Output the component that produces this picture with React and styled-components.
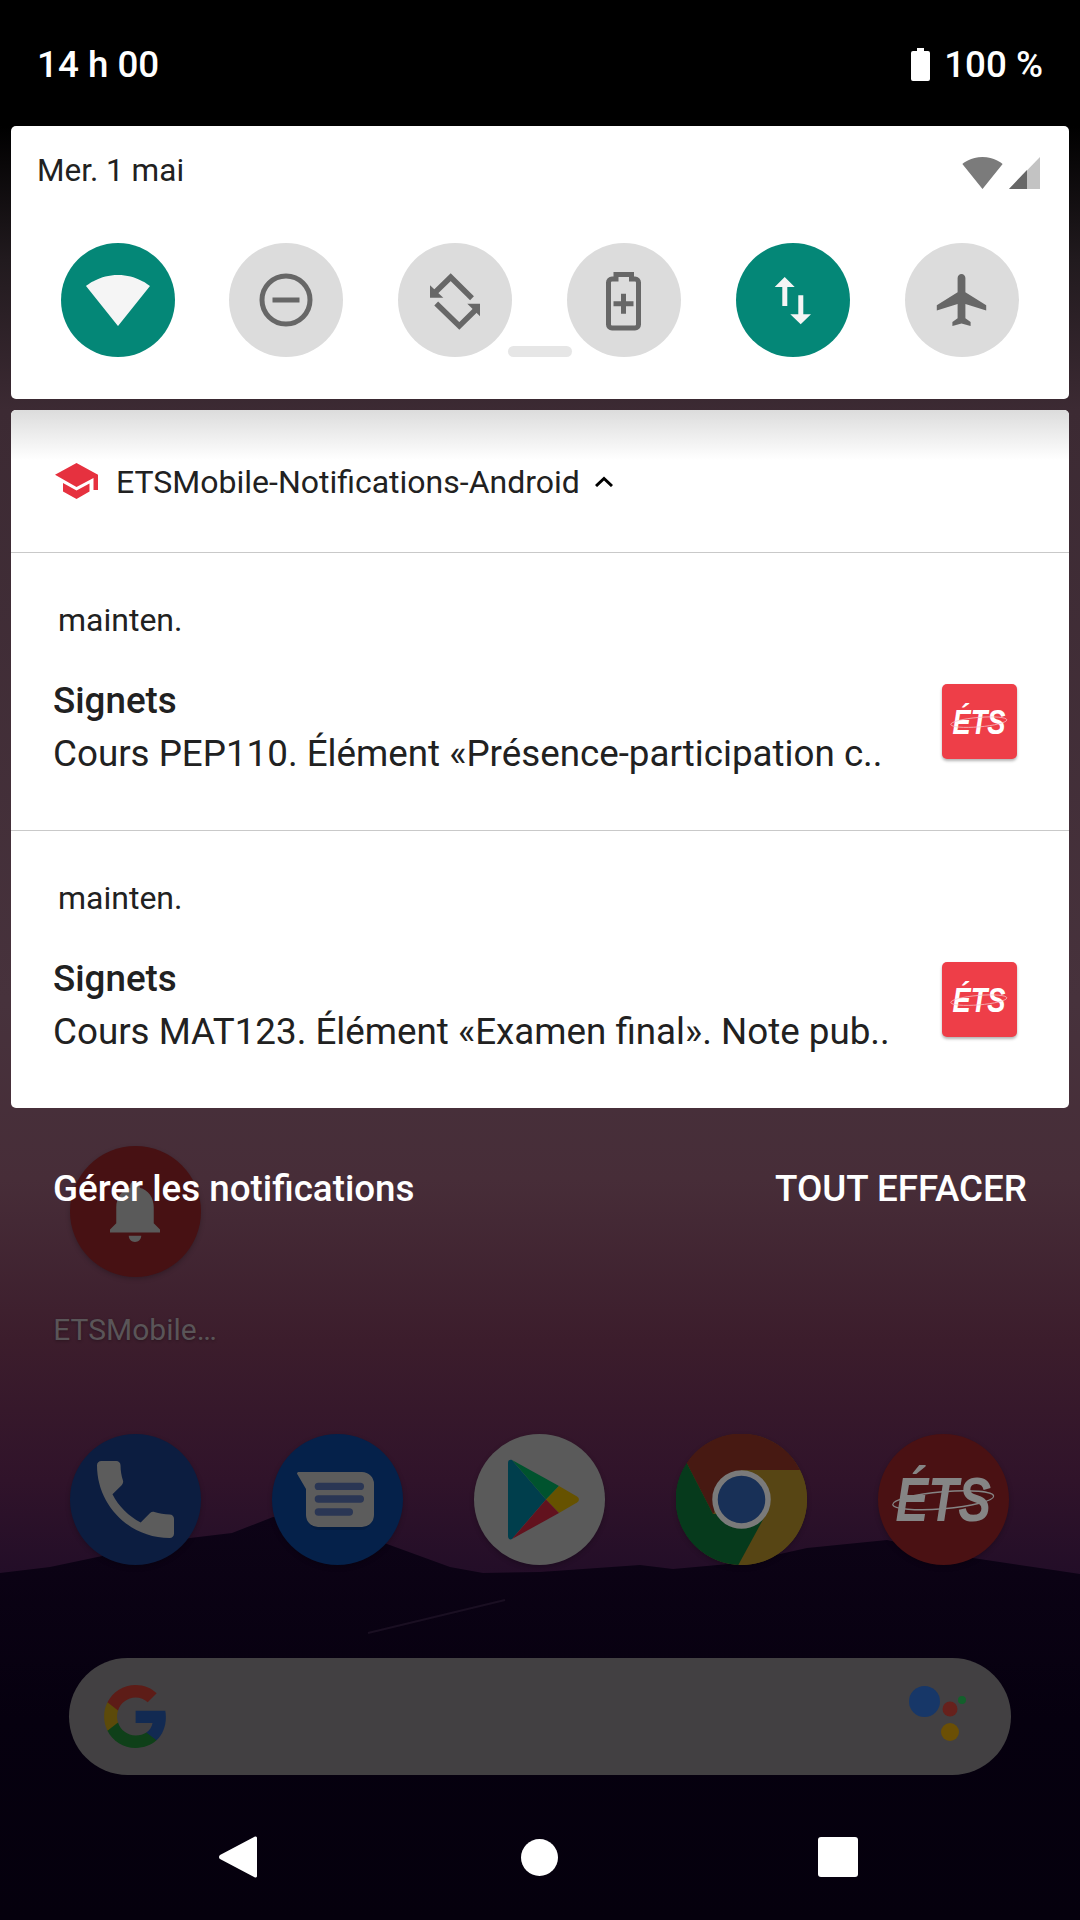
import React from "react";
import styled, { createGlobalStyle } from "styled-components";

const GlobalStyle = createGlobalStyle`
  html, body {
    margin: 0;
    padding: 0;
    background: #000;
  }
  * {
    box-sizing: border-box;
  }
`;

const Screen = styled.div`
  position: relative;
  width: 1080px;
  height: 1920px;
  overflow: hidden;
  font-family: Roboto, "Liberation Sans", sans-serif;
  background: linear-gradient(
    #000 0,
    #000 126px,
    #211a1e 260px,
    #3c2a33 410px,
    #47323c 1000px,
    #472d38 1180px,
    #3c1d2c 1340px,
    #30132a 1480px,
    #1f0c27 1600px
  );
`;

const Hills = styled.svg`
  position: absolute;
  left: 0;
  top: 1500px;
  width: 1080px;
  height: 420px;
`;

/* home screen behind the shade */
const Home = styled.div`
  position: absolute;
  inset: 0;
  display: flex;
  flex-direction: column;
  justify-content: flex-end;
`;

const Shortcut = styled.div`
  width: 202px;
  display: flex;
  flex-direction: column;
  align-items: center;
  margin-left: 34px;
`;

const ShortcutLabel = styled.div`
  margin-top: 36px;
  font-size: 30px;
  line-height: 34px;
  color: #5a5558;
  text-shadow: 0 1px 3px rgba(0, 0, 0, 0.3);
`;

const Dock = styled.div`
  display: flex;
  gap: 71px;
  padding-left: 70px;
  margin-top: 87px;
`;

const AppIcon = styled.div`
  position: relative;
  width: 131px;
  height: 131px;
  flex: none;
  display: flex;
  align-items: center;
  justify-content: center;
  border-radius: 50%;
  background: ${(p) => p.$bg};
  box-shadow: 0 2px 5px rgba(0, 0, 0, 0.22);
`;

const SearchBar = styled.div`
  height: 117px;
  margin: 93px 69px 0;
  padding: 0 40px 0 35px;
  display: flex;
  align-items: center;
  justify-content: space-between;
  border-radius: 59px;
  background: #424042;
`;

const NavBar = styled.div`
  height: 126px;
  margin-top: 19px;
  padding-left: 219px;
  padding-right: 222px;
  display: flex;
  align-items: center;
  justify-content: space-between;
`;

const HomeDot = styled.svg`
  margin-left: 4px;
`;

/* notification shade */
const Shade = styled.div`
  position: relative;
  z-index: 1;
  display: flex;
  flex-direction: column;
  height: 1920px;
`;

const StatusBar = styled.div`
  height: 126px;
  padding: 0 37px 0 37px;
  display: flex;
  align-items: flex-start;
  justify-content: space-between;
  color: #fff;
  font-size: 36.75px;
  font-weight: 500;
  line-height: 40px;
`;

const StatusText = styled.span`
  margin-top: 45px;
`;

const StatusRight = styled.div`
  display: flex;
  align-items: flex-start;
  gap: 14px;
`;

const QuickPanel = styled.section`
  position: relative;
  height: 273px;
  margin: 0 11px;
  border-radius: 5px;
  background: #fff;
`;

const DateRow = styled.div`
  height: 117px;
  padding: 27px 29px 0 26px;
  display: flex;
  align-items: flex-start;
  justify-content: space-between;
  color: #212121;
  font-size: 31.5px;
  line-height: 36px;
`;

const RowIcons = styled.div`
  display: flex;
  align-items: flex-start;
  gap: 6px;
  padding-top: 4px;
`;

const Tiles = styled.div`
  display: flex;
  justify-content: space-between;
  padding: 0 50px 0 49.6px;
`;

const Tile = styled.div`
  width: 114px;
  height: 114px;
  display: flex;
  align-items: center;
  justify-content: center;
  border-radius: 50%;
  background: ${(p) => (p.$on ? "#048777" : "#dcdcdc")};
`;

const Handle = styled.div`
  position: absolute;
  left: 497px;
  top: 220px;
  width: 64px;
  height: 11px;
  border-radius: 6px;
  background: #e6e6e6;
`;

const NotifPanel = styled.section`
  margin: 11px 11px 0;
  height: 698px;
  border-radius: 5px;
  overflow: hidden;
  background: #fff;
`;

const GroupHeader = styled.header`
  height: 143px;
  padding: 53px 0 0 44px;
  display: flex;
  align-items: flex-start;
  background: linear-gradient(#dcdcdc 0, #fff 50px);
  border-bottom: 1px solid #c9c9c9;
`;

const GroupTitle = styled.span`
  margin-left: 18px;
  margin-right: 15px;
  font-size: 32px;
  line-height: 38px;
  color: #212121;
  white-space: nowrap;
`;

const Notification = styled.article`
  height: 278px;
  padding: 49px 52px 0 42px;
  border-bottom: ${(p) => (p.$last ? "none" : "1px solid #c9c9c9")};
`;

const TimeLabel = styled.div`
  margin-left: 5px;
  font-size: 32px;
  line-height: 36px;
  color: #212121;
`;

const NotifRow = styled.div`
  display: flex;
  justify-content: space-between;
  margin-top: 41px;
`;

const NotifTitle = styled.div`
  font-size: 36.75px;
  font-weight: 500;
  line-height: 44px;
  color: #212121;
`;

const NotifBody = styled.div`
  margin-top: 10px;
  font-size: 36.75px;
  line-height: 42px;
  color: #212121;
  white-space: nowrap;
`;

const Thumb = styled.div`
  width: 75px;
  height: 75px;
  margin-top: 5px;
  flex: none;
  display: flex;
  align-items: center;
  justify-content: center;
  border-radius: 5px;
  background: #ee3e48;
  box-shadow: 0 2px 3px rgba(0, 0, 0, 0.3);
`;

const ShadeFooter = styled.div`
  display: flex;
  justify-content: space-between;
  padding: 59px 53px 0 53px;
  color: #fff;
  font-size: 36.75px;
  font-weight: 500;
  line-height: 44px;
`;

/* the school wordmark, real text with the orbit line over it */
const Mark = styled.span`
  position: relative;
  display: inline-block;
  font-family: "Liberation Sans", Arial, sans-serif;
  font-style: italic;
  font-weight: 700;
  line-height: 1;
  font-size: ${(p) => p.$size}px;
  color: ${(p) => p.$color};
  transform: scaleX(0.78);
`;

const Orbit = styled.svg`
  position: absolute;
  left: -4%;
  top: 22%;
  width: 108%;
  height: 58%;
  overflow: visible;
`;

const EtsMark = ({ size, color, line }) => (
  <Mark $size={size} $color={color}>
    ÉTS
    <Orbit viewBox="0 0 100 30" preserveAspectRatio="none">
      <ellipse
        cx="50"
        cy="15"
        rx="49"
        ry="7"
        fill="none"
        stroke={line}
        strokeWidth="1.2"
        transform="rotate(-4 50 15)"
      />
    </Orbit>
  </Mark>
);

const WifiPath =
  "M12.01 21.49L23.64 7c-.45-.34-4.93-4-11.64-4C5.28 3 .81 6.66.36 7l11.63 14.49.01.01.01-.01z";

const BatteryIcon = () => (
  <svg width="19" height="33" viewBox="0 0 19 33" style={{ marginTop: 48 }}>
    <path d="M6 0h7v3h4a2 2 0 0 1 2 2v26a2 2 0 0 1-2 2H2a2 2 0 0 1-2-2V5a2 2 0 0 1 2-2h4z" fill="#fff" />
  </svg>
);

const DndIcon = () => (
  <svg width="114" height="114" viewBox="0 0 114 114">
    <circle cx="57" cy="57" r="24" fill="none" stroke="#676767" strokeWidth="5" />
    <rect x="43.5" y="54.5" width="27" height="5" fill="#676767" />
  </svg>
);

const RotateIcon = () => (
  <svg width="114" height="114" viewBox="0 0 114 114">
    <g fill="none" stroke="#676767" strokeWidth="5.5">
      <path d="M37 49.5 52.7 34.2 74 55.2" />
      <path d="M38.2 60.5 61.3 83 78 66.5" />
    </g>
    <path d="M32 42.3V54.7H45.3Z" fill="#676767" />
    <path d="M82 60.7V73.3L69.3 60.7Z" fill="#676767" />
  </svg>
);

const BatterySaverIcon = () => (
  <svg width="114" height="114" viewBox="0 0 114 114">
    <path
      d="M49 36V31.5H64.5V36H68a3.5 3.5 0 0 1 3.5 3.5V81.5a3.5 3.5 0 0 1-3.5 3.5H45a3.5 3.5 0 0 1-3.5-3.5V39.5A3.5 3.5 0 0 1 45 36Z"
      fill="none"
      stroke="#676767"
      strokeWidth="5"
    />
    <path d="M54 50.7h5v7.5h7.5v5H59v7.5h-5v-7.5h-7.5v-5H54Z" fill="#676767" />
  </svg>
);

const DataIcon = () => (
  <svg width="114" height="114" viewBox="0 0 114 114">
    <path
      d="M48.7 34 58.7 44H51.3V63H46.3V44H38.7ZM62.3 52.3H67.3V71.3H75L64.7 81.3 54.3 71.3H62.3Z"
      fill="#f5f5f5"
    />
  </svg>
);

const PlaneIcon = () => (
  <svg width="51" height="52" viewBox="2 2 19 20">
    <path
      d="M21 16v-2l-8-5V3.5c0-.83-.67-1.5-1.5-1.5S10 2.67 10 3.5V9l-8 5v2l8-2.5V19l-2 1.5V22l3.5-1 3.5 1v-1.5L13 19v-5.5l8 2.5z"
      fill="#676767"
    />
  </svg>
);

const CapIcon = () => (
  <svg width="43" height="36" viewBox="0 0 43 36">
    <path d="M21.500 0 43 11.700V27H38.500V15L21.500 24 0 11.700Z" fill="#e6313f" />
    <path d="M8 20 21.500 27.500 34.500 20.500V28.500L21.500 36 8 28.500Z" fill="#e6313f" />
  </svg>
);

const Chevron = () => (
  <svg width="18" height="11" viewBox="0 0 18 11" style={{ marginTop: 13 }}>
    <path d="M1 10 9 2.500 17 10" fill="none" stroke="#000" strokeWidth="3" />
  </svg>
);

const BellIcon = () => (
  <svg width="50" height="61" viewBox="4 2.5 16 19.5">
    <path
      d="M12 22c1.1 0 2-.9 2-2h-4c0 1.1.89 2 2 2zm6-6v-5c0-3.07-1.64-5.64-4.5-6.32V4c0-.83-.67-1.5-1.5-1.5s-1.5.67-1.5 1.5v.68C7.63 5.36 6 7.92 6 11v5l-2 2v1h16v-1l-2-2z"
      fill="#5a5a5a"
    />
  </svg>
);

const PhoneIcon = () => (
  <svg width="77" height="77" viewBox="3 3 18 18">
    <path
      d="M6.62 10.79c1.44 2.83 3.76 5.14 6.59 6.59l2.2-2.2c.27-.27.67-.36 1.02-.24 1.12.37 2.33.57 3.57.57.55 0 1 .45 1 1V20c0 .55-.45 1-1 1-9.39 0-17-7.61-17-17 0-.55.45-1 1-1h3.5c.55 0 1 .45 1 1 0 1.25.2 2.45.57 3.57.11.35.03.74-.25 1.02l-2.2 2.2z"
      fill="#5c5c5c"
    />
  </svg>
);

const MessagesIcon = () => (
  <svg width="131" height="131" viewBox="0 0 131 131">
    <path d="M34 43H88a12 12 0 0 1 12 12V84a12 12 0 0 1-12 12H48a12 12 0 0 1-12-12V62Z" fill="#04193a" opacity="0.5" />
    <path d="M27 38H90a12 12 0 0 1 12 12V81a12 12 0 0 1-12 12H46a12 12 0 0 1-12-12V55L25.500 40.500A1.500 1.500 0 0 1 27 38Z" fill="#5c5c5c" />
    <rect x="42.700" y="48.700" width="49.300" height="7.400" rx="3.700" fill="#2a3654" />
    <rect x="42.700" y="61.300" width="49.300" height="7.400" rx="3.700" fill="#2a3654" />
    <rect x="42.700" y="74.300" width="38.300" height="7.400" rx="3.700" fill="#2a3654" />
  </svg>
);

const PlayIcon = () => (
  <svg width="131" height="131" viewBox="0 0 131 131">
    <path d="M34 29C34 26 36 25 38 26L72 65.500 38 105C36 106 34 105 34 102Z" fill="#003e4c" />
    <path d="M38 26 85 52 72 65.500Z" fill="#00532e" />
    <path d="M85 52 103 62.500C105.500 64 105.500 67 103 68.500L85 79 72 65.500Z" fill="#665200" />
    <path d="M38 105 85 79 72 65.500Z" fill="#62121e" />
  </svg>
);

const ChromeIcon = () => (
  <svg width="131" height="131" viewBox="0 0 131 131">
    <path d="M10.700 29A65.500 65.500 0 0 1 124 36H65.500L37 80Z" fill="#471912" />
    <path d="M124 36A65.500 65.500 0 0 1 62.300 131L90 80 65.500 36Z" fill="#574514" />
    <path d="M10.700 29A65.500 65.500 0 0 0 62.300 131L90 80H37Z" fill="#063a1c" />
    <circle cx="65.500" cy="65.500" r="26.500" fill="#183057" stroke="#7a7a7a" strokeWidth="5.500" />
  </svg>
);

const GoogleIcon = () => (
  <svg width="62" height="63" viewBox="2 2 43.12 44">
    <path d="M45.12 24.5c0-1.56-.14-3.06-.4-4.5H24v8.51h11.84c-.51 2.75-2.06 5.08-4.39 6.64v5.52h7.11c4.16-3.83 6.56-9.47 6.56-16.17z" fill="#122a52" />
    <path d="M24 46c5.94 0 10.92-1.97 14.56-5.33l-7.11-5.52c-1.97 1.32-4.49 2.1-7.45 2.1-5.73 0-10.58-3.87-12.31-9.07H4.34v5.7C7.96 41.07 15.4 46 24 46z" fill="#0f4019" />
    <path d="M11.69 28.18C11.25 26.86 11 25.45 11 24s.25-2.86.69-4.18v-5.7H4.34C2.85 17.09 2 20.45 2 24c0 3.55.85 6.91 2.34 9.88l7.35-5.7z" fill="#5c4a0a" />
    <path d="M24 10.750c3.230 0 6.130 1.110 8.410 3.290l6.310-6.310C34.910 4.180 29.930 2 24 2 15.400 2 7.960 6.930 4.340 14.120l7.350 5.700c1.730-5.200 6.580-9.070 12.310-9.070z" fill="#5d1c17" />
  </svg>
);

const AssistantIcon = () => (
  <svg width="62" height="62" viewBox="0 0 62 62">
    <circle cx="15.500" cy="15.500" r="15.500" fill="#173768" />
    <circle cx="41" cy="23" r="7.500" fill="#66211c" />
    <circle cx="41" cy="46" r="9" fill="#6b4f05" />
    <circle cx="53" cy="14" r="4" fill="#14602c" />
  </svg>
);

const notifications = [
  { id: 1, body: "Cours PEP110. Élément «Présence-participation c.." },
  { id: 2, body: "Cours MAT123. Élément «Examen final». Note pub.." },
];

const App = () => {
  return (
    <Screen>
      <GlobalStyle />
      <Hills viewBox="0 0 1080 420">
        <defs>
          <linearGradient id="hillFill" x1="0" y1="0" x2="0" y2="1">
            <stop offset="0" stopColor="#0d0316" />
            <stop offset="0.5" stopColor="#06000f" />
            <stop offset="1" stopColor="#05000d" />
          </linearGradient>
        </defs>
        <path
          d="M0 73 50 67Q120 52 190 38L232 33 273 17Q330 22 387 44L450 67 483 73 540 72 640 65 673 69 740 63 807 48 887 40 973 58 1040 68 1080 74V420H0Z"
          fill="url(#hillFill)"
        />
        <path d="M368 133 505 100" fill="none" stroke="#1a0f22" strokeWidth="2" />
      </Hills>

      <Home>
        <Shortcut>
          <AppIcon $bg="#471113"><BellIcon /></AppIcon>
          <ShortcutLabel>ETSMobile…</ShortcutLabel>
        </Shortcut>
        <Dock>
          <AppIcon $bg="#0c1d40"><PhoneIcon /></AppIcon>
          <AppIcon $bg="#05214a"><MessagesIcon /></AppIcon>
          <AppIcon $bg="#5a5a5a"><PlayIcon /></AppIcon>
          <AppIcon $bg="#574514"><ChromeIcon /></AppIcon>
          <AppIcon $bg="#4a1113"><EtsMark size={63} color="#858585" line="#858585" /></AppIcon>
        </Dock>
        <SearchBar>
          <GoogleIcon />
          <AssistantIcon />
        </SearchBar>
        <NavBar>
          <svg width="38" height="42" viewBox="0 0 38 42">
            <path d="M36 0.500 1 19a2.500 2.500 0 0 0 0 4L36 41.500a1.500 1.500 0 0 0 2-1.500V2a1.500 1.500 0 0 0-2-1.500Z" fill="#fff" />
          </svg>
          <HomeDot width="37" height="37" viewBox="0 0 37 37">
            <circle cx="18.500" cy="18.500" r="18.500" fill="#fff" />
          </HomeDot>
          <svg width="40" height="40" viewBox="0 0 40 40">
            <rect width="40" height="40" rx="3" fill="#fff" />
          </svg>
        </NavBar>
      </Home>

      <Shade>
        <StatusBar>
          <StatusText>14 h 00</StatusText>
          <StatusRight>
            <BatteryIcon />
            <StatusText>100 %</StatusText>
          </StatusRight>
        </StatusBar>

        <QuickPanel>
          <DateRow>
            <span>Mer. 1 mai</span>
            <RowIcons>
              <svg width="41" height="32" viewBox="0.360 3 23.280 18.500">
                <path d={WifiPath} fill="#7b7b7b" />
              </svg>
              <svg width="31" height="32" viewBox="0 0 31 32">
                <path d="M31 0V32H0Z" fill="#c3c3c3" />
                <path d="M18 13V32H0Z" fill="#676767" />
              </svg>
            </RowIcons>
          </DateRow>
          <Tiles>
            <Tile $on>
              <svg width="64" height="51" viewBox="0.360 3 23.280 18.500">
                <path d={WifiPath} fill="#f5f5f5" />
              </svg>
            </Tile>
            <Tile><DndIcon /></Tile>
            <Tile><RotateIcon /></Tile>
            <Tile><BatterySaverIcon /></Tile>
            <Tile $on><DataIcon /></Tile>
            <Tile><PlaneIcon /></Tile>
          </Tiles>
          <Handle />
        </QuickPanel>

        <NotifPanel>
          <GroupHeader>
            <CapIcon />
            <GroupTitle>ETSMobile-Notifications-Android</GroupTitle>
            <Chevron />
          </GroupHeader>
          {notifications.map((n, i) => (
            <Notification key={n.id} $last={i === notifications.length - 1}>
              <TimeLabel>mainten.</TimeLabel>
              <NotifRow>
                <div>
                  <NotifTitle>Signets</NotifTitle>
                  <NotifBody>{n.body}</NotifBody>
                </div>
                <Thumb>
                  <EtsMark size={35} color="#fff" line="#f7c5c8" />
                </Thumb>
              </NotifRow>
            </Notification>
          ))}
        </NotifPanel>

        <ShadeFooter>
          <span>Gérer les notifications</span>
          <span>TOUT EFFACER</span>
        </ShadeFooter>
      </Shade>
    </Screen>
  );
};

export default App;
